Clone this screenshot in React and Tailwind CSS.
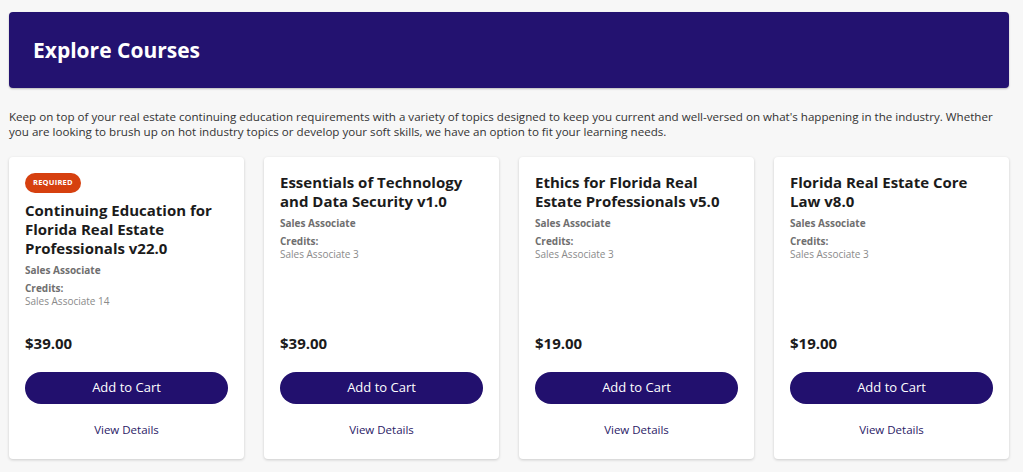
import React from 'react';

const COURSES = [
  {
    title: 'Continuing Education for Florida Real Estate Professionals v22.0',
    required: true,
    credits: 'Sales Associate 14',
    price: '$39.00',
  },
  {
    title: 'Essentials of Technology and Data Security v1.0',
    credits: 'Sales Associate 3',
    price: '$39.00',
  },
  {
    title: 'Ethics for Florida Real Estate Professionals v5.0',
    credits: 'Sales Associate 3',
    price: '$19.00',
  },
  {
    title: 'Florida Real Estate Core Law v8.0',
    credits: 'Sales Associate 3',
    price: '$19.00',
  },
];

function CourseCard({ course }) {
  return (
    <div className="flex flex-col bg-white rounded-[4px] shadow-[0_1px_3px_rgba(0,0,0,0.18)] px-4 pt-4 pb-[21px]">
      <div className="flex-1">
        {course.required && (
          <div className="flex w-fit items-center h-5 px-[8px] mb-2 rounded-full bg-[#d6400f] text-white text-[7.5px] leading-none font-bold tracking-[0.03em] uppercase">
            Required
          </div>
        )}
        <h3 className="text-[15px] leading-[19px] font-bold text-[#1b1b1b]">{course.title}</h3>
        <div className="mt-[5px] text-[10px] leading-[14px] font-bold text-[#6f6f6f]">Sales Associate</div>
        <div className="mt-[5px] text-[10px] leading-[13px] font-bold text-[#6f6f6f]">Credits:</div>
        <div className="text-[10px] leading-[13px] text-[#8a8a8a]">{course.credits}</div>
      </div>
      <div className="pt-[26px]">
        <div className="text-[15px] leading-[18px] font-bold text-[#1b1b1b]">{course.price}</div>
        <button className="mt-5 w-full h-8 rounded-full bg-[#22106e] text-white text-[13px]">
          Add to Cart
        </button>
        <div className="mt-[18px] text-center text-[11.5px] leading-4 text-[#2a1a66]">View Details</div>
      </div>
    </div>
  );
}

export default function App() {
  return (
    <div className="min-h-[472px] bg-[#f7f7f7] pl-[9px] pr-[14px] pt-3 font-['Open_Sans',sans-serif]">
      <div className="h-[76px] flex items-center px-6 pt-[2px] rounded-[4px] bg-[#231270] shadow-[0_1px_2px_rgba(0,0,0,0.25)]">
        <h1 className="text-[21px] font-bold text-white">Explore Courses</h1>
      </div>
      <p className="mt-[21px] text-[11.6px] leading-[15px] text-[#333]">
        Keep on top of your real estate continuing education requirements with a variety of topics designed to keep you current and well-versed on what's happening in the industry. Whether you are looking to brush up on hot industry topics or develop your soft skills, we have an option to fit your learning needs.
      </p>
      <div className="mt-[18px] grid grid-cols-4 gap-5">
        {COURSES.map(c => <CourseCard key={c.title} course={c} />)}
      </div>
    </div>
  );
}
